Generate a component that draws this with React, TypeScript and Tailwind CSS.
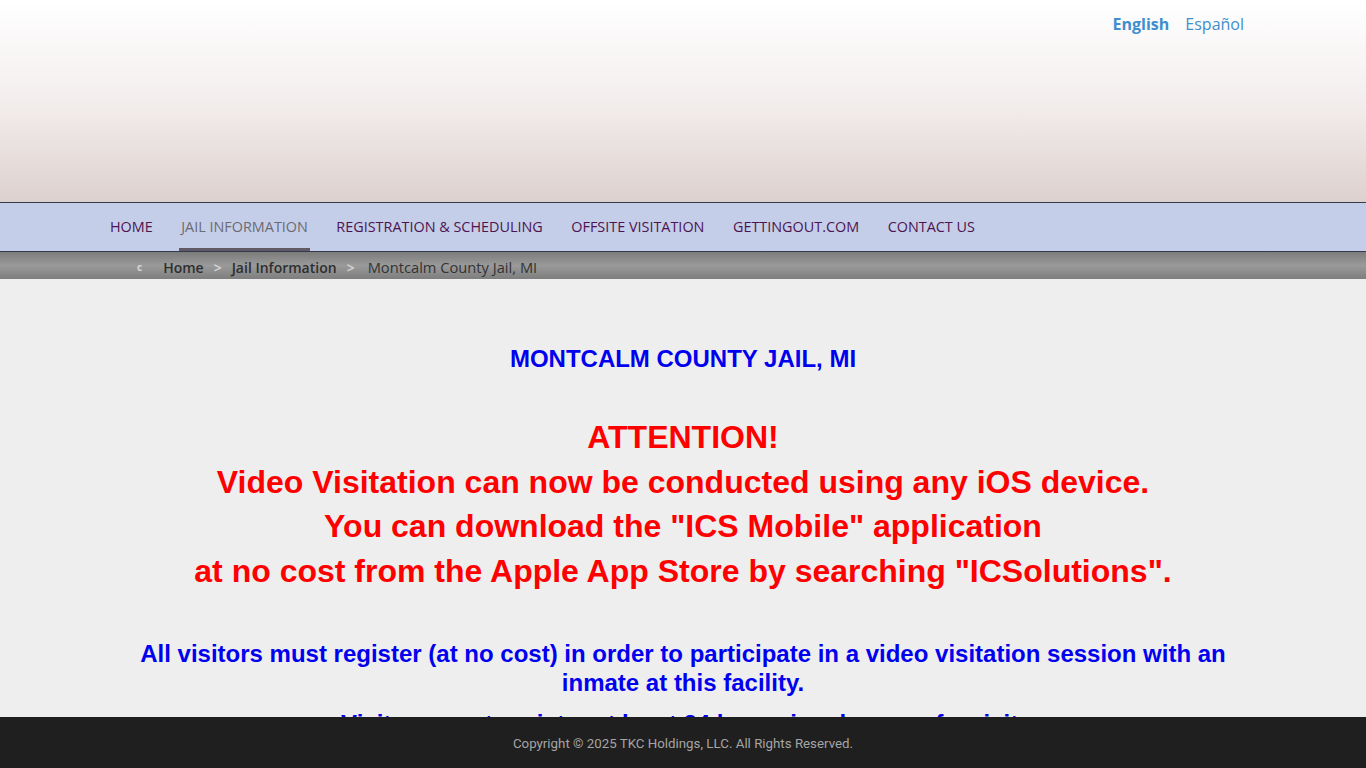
import React from 'react';

const navItems = [
  { label: 'HOME', active: false },
  { label: 'JAIL INFORMATION', active: true },
  { label: 'REGISTRATION & SCHEDULING', active: false },
  { label: 'OFFSITE VISITATION', active: false },
  { label: 'GETTINGOUT.COM', active: false },
  { label: 'CONTACT US', active: false },
];

const App: React.FC = () => {
  return (
    <div className="min-h-screen bg-[#eeeeee] font-['Open_Sans',sans-serif]">
      {/* header */}
      <div className="h-[202px] bg-gradient-to-b from-white via-[#f3eeed] to-[#ddd1cf]">
        <div className="flex justify-end gap-4 pr-[122px] pt-[12px] text-[16px] text-[#3f8fcf]">
          <a className="font-bold">English</a>
          <a>Español</a>
        </div>
      </div>

      {/* nav */}
      <div className="h-[50px] border-y border-[#333a4a] bg-[#c5cee9]">
        <ul className="flex h-full gap-[24.5px] pl-[108px]">
          {navItems.map((item) => (
            <li
              key={item.label}
              className={
                'flex h-full items-center px-[2px] pb-[1px] text-[14.4px] ' +
                (item.active
                  ? 'border-b-[3px] border-[#5f5a66] pt-[3px] text-[#6b6b73]'
                  : 'text-[#4d1450]')
              }
            >
              {item.label}
            </li>
          ))}
        </ul>
      </div>

      {/* breadcrumb */}
      <div className="h-[27px] bg-gradient-to-b from-[#7c7c7c] via-[#9a9a9a] to-[#7e7e7e]">
        <div className="flex h-full items-center gap-[10px] pl-[137px] pt-[4px] text-[14px] text-[#333]">
          <span className="mr-[11px] text-[10px] font-bold text-[#d8d8d8]">c</span>
          <a className="font-semibold text-[#2e2e2e]">Home</a>
          <span className="font-bold text-[#cfcfcf]">&gt;</span>
          <a className="font-semibold text-[#2e2e2e]">Jail Information</a>
          <span className="font-bold text-[#cfcfcf]">&gt;</span>
          <span className="ml-[3px] text-[14.7px] text-[#333]">Montcalm County Jail, MI</span>
        </div>
      </div>

      {/* content */}
      <div className="mx-auto w-[1146px] pb-24 pt-[66px] text-center font-['Liberation_Sans',Arial,sans-serif] font-bold">
        <h1 className="text-[24px] leading-[28px] text-[#0000ee]">MONTCALM COUNTY JAIL, MI</h1>
        <div className="mt-[42px] text-[32px] leading-[44.7px] text-[#ff0000]">
          <p>ATTENTION!</p>
          <p>Video Visitation can now be conducted using any iOS device.</p>
          <p>You can download the "ICS Mobile" application</p>
          <p>at no cost from the Apple App Store by searching "ICSolutions".</p>
        </div>
        <p className="mt-[45px] text-[24px] leading-[29px] text-[#0000ee]">
          All visitors must register (at no cost) in order to participate in a video visitation session with an inmate at this facility.
        </p>
        <p className="mt-[12px] text-[24px] leading-[29px] text-[#0000ee]">
          Visitors must register at least 24 hours in advance of a visit.
        </p>
      </div>

      {/* footer */}
      <div className="fixed bottom-0 left-0 right-0 flex h-[51px] items-center justify-center bg-[#1f1f1f] pt-[2px]">
        <p className="font-['Liberation_Sans_Narrow','Roboto',sans-serif] text-[13.3px] text-[#a5a5a5]">
          Copyright © 2025 TKC Holdings, LLC. All Rights Reserved.
        </p>
      </div>
    </div>
  );
};

export default App;
